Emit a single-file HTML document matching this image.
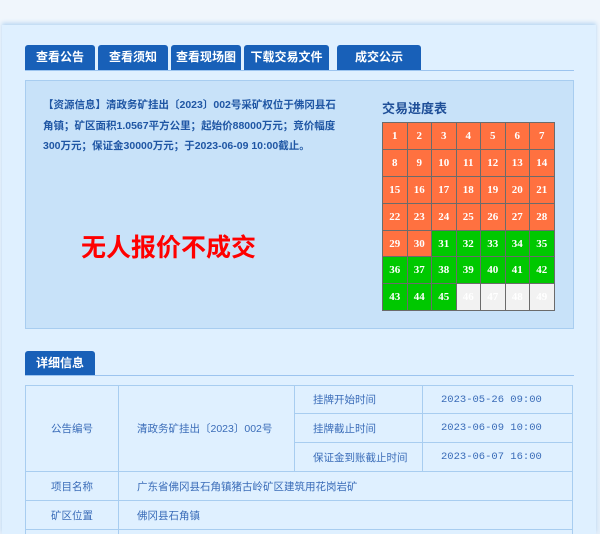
<!DOCTYPE html>
<html><head><meta charset="utf-8"><style>
html,body{margin:0;width:600px;height:534px;overflow:hidden}
body{background:linear-gradient(#f0f6fc,#e4effa);font-family:"Liberation Sans","Noto Sans CJK SC",sans-serif;position:relative}
.panel{position:absolute;left:2px;top:25px;width:594px;height:509px;background:#dff0ff;box-shadow:0 -2px 4px #b9d6f2}
.tab{position:absolute;top:45px;height:25px;background:#1860b8;color:#fff;font-size:12px;font-weight:bold;text-align:center;line-height:25px;border-radius:3px 3px 0 0}
.line{position:absolute;left:25px;width:549px;height:1px;background:#9cc4ef}
.info{position:absolute;left:25px;top:80px;width:547px;height:247px;background:#c8e2f9;border:1px solid #a8cdf0}
.txt{position:absolute;left:17px;top:14px;width:300px;font-size:10.5px;font-weight:bold;color:#1f56a4;line-height:20.5px}
.red{position:absolute;left:55px;top:147px;font-size:25px;font-weight:bold;color:#f00}
.ttl{position:absolute;left:356px;top:17px;font-size:13px;font-weight:bold;color:#1f4f98}
table.g{position:absolute;left:356px;top:41px;border-collapse:collapse}
table.g td{width:23.5px;height:25.9px;border:1px solid #6b6b6b;background:#ff7140;color:#fff;font:bold 11px "Liberation Serif",serif;text-align:center;padding:0}
table.g td.gr{background:#00c800}table.g td.w{background:#f2f2f2}
table.d{position:absolute;left:25px;top:385px;border-collapse:collapse;font-size:10.5px;color:#3a6cb8}
table.d td{border:1px solid #a8cdf0;height:28px;padding:0}
</style></head><body>
<div class="panel"></div>
<div class="tab" style="left:25px;width:70px">查看公告</div>
<div class="tab" style="left:98px;width:70px">查看须知</div>
<div class="tab" style="left:171px;width:70px">查看现场图</div>
<div class="tab" style="left:244px;width:85px">下载交易文件</div>
<div class="tab" style="left:337px;width:84px">成交公示</div>
<div class="line" style="top:70px"></div>
<div class="info">
<div class="txt">【资源信息】清政务矿挂出〔2023〕002号采矿权位于佛冈县石角镇；矿区面积1.0567平方公里；起始价88000万元；竞价幅度300万元；保证金30000万元；于2023-06-09 10:00截止。</div>
<div class="red">无人报价不成交</div>
<div class="ttl">交易进度表</div>
<table class="g">
<tr><td>1</td><td>2</td><td>3</td><td>4</td><td>5</td><td>6</td><td>7</td></tr>
<tr><td>8</td><td>9</td><td>10</td><td>11</td><td>12</td><td>13</td><td>14</td></tr>
<tr><td>15</td><td>16</td><td>17</td><td>18</td><td>19</td><td>20</td><td>21</td></tr>
<tr><td>22</td><td>23</td><td>24</td><td>25</td><td>26</td><td>27</td><td>28</td></tr>
<tr><td>29</td><td>30</td><td class="gr">31</td><td class="gr">32</td><td class="gr">33</td><td class="gr">34</td><td class="gr">35</td></tr>
<tr><td class="gr">36</td><td class="gr">37</td><td class="gr">38</td><td class="gr">39</td><td class="gr">40</td><td class="gr">41</td><td class="gr">42</td></tr>
<tr><td class="gr">43</td><td class="gr">44</td><td class="gr">45</td><td class="w">46</td><td class="w">47</td><td class="w">48</td><td class="w">49</td></tr>
</table>
</div>
<div class="tab" style="left:25px;top:351px;height:24px;line-height:24px;width:70px">详细信息</div>
<div class="line" style="top:375px"></div>
<table class="d">
<tr><td rowspan="3" style="width:92px;text-align:center">公告编号</td><td rowspan="3" style="width:176px;padding-left:18px;box-sizing:border-box">清政务矿挂出〔2023〕002号</td><td style="width:128px;padding-left:18px;box-sizing:border-box">挂牌开始时间</td><td style="width:150px;padding-left:18px;box-sizing:border-box;font-family:'Liberation Mono',monospace">2023-05-26 09:00</td></tr>
<tr><td style="padding-left:18px">挂牌截止时间</td><td style="padding-left:18px;font-family:'Liberation Mono',monospace">2023-06-09 10:00</td></tr>
<tr><td style="padding-left:18px">保证金到账截止时间</td><td style="padding-left:18px;font-family:'Liberation Mono',monospace">2023-06-07 16:00</td></tr>
<tr><td style="text-align:center">项目名称</td><td colspan="3" style="padding-left:18px">广东省佛冈县石角镇猪古岭矿区建筑用花岗岩矿</td></tr>
<tr><td style="text-align:center">矿区位置</td><td colspan="3" style="padding-left:18px">佛冈县石角镇</td></tr>
<tr><td>&nbsp;</td><td colspan="3"></td></tr>
</table>
</body></html>
